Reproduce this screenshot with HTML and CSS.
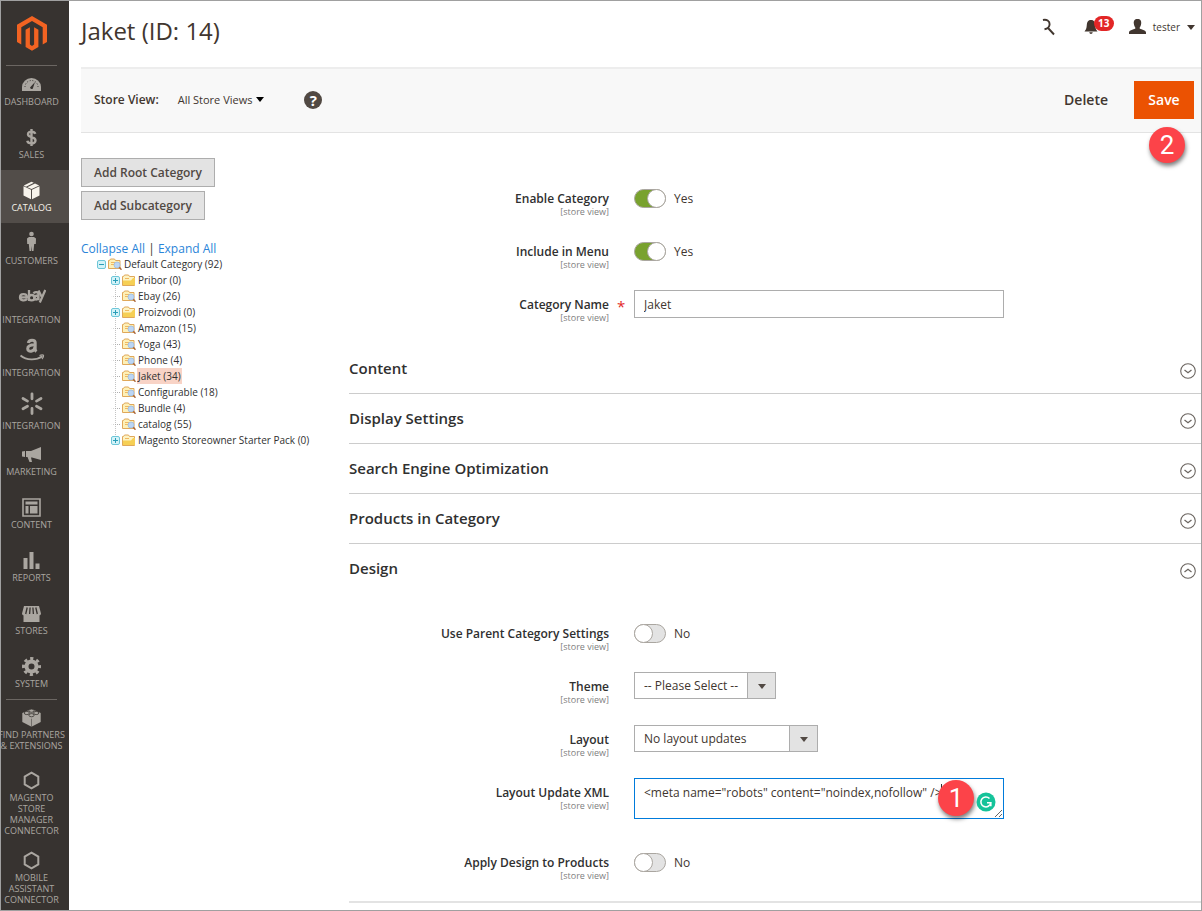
FILE: index.html
```html
<!DOCTYPE html>
<html lang="en">
<head>
<meta charset="utf-8">
<title>Jaket (ID: 14)</title>
<link rel="stylesheet" href="styles.css">
</head>
<body>
<svg class="defs" aria-hidden="true">
  <symbol id="folder" viewBox="0 0 14 12">
    <path d="M.5 11.500V2.500h1l1-1.500h4l1 1.500h5v9z" fill="#fdf3c4" stroke="#e0a85a"/>
    <path d="M1 11V6.500h8l2-2.500h2v7z" fill="#f6cf55"/>
    <path d="M3 4.500h4" stroke="#f0b860"/>
  </symbol>
  <symbol id="folder-search" viewBox="0 0 14 12">
    <path d="M.5 10.500V2.500h1l1-1.500h4l1 1.500h4.500v8z" fill="#fdf0b8" stroke="#e0a85a"/>
    <path d="M3 4.500h4M3 6.500h3" stroke="#f0b860"/>
    <circle cx="9" cy="7" r="3" fill="#bcd6f5" stroke="#9dbbe0" stroke-width=".8"/>
    <path d="M11.300 9.300l2.200 2.400" stroke="#a8663c" stroke-width="1.500"/>
  </symbol>
  <symbol id="plus" viewBox="0 0 9 9">
    <rect x=".5" y=".5" width="8" height="8" rx="1.500" fill="#d4f3f8" stroke="#6ec6d8"/>
    <path d="M2 4.500h5M4.500 2v5" stroke="#2a9db8"/>
  </symbol>
  <symbol id="minus" viewBox="0 0 9 9">
    <rect x=".5" y=".5" width="8" height="8" rx="1.500" fill="#d4f3f8" stroke="#6ec6d8"/>
    <path d="M2 4.500h5" stroke="#2a9db8"/>
  </symbol>
  <symbol id="chevron" viewBox="0 0 16 16">
    <circle cx="8" cy="8" r="7.300" fill="none" stroke="#6b6560" stroke-width="1.100"/>
    <path d="M4.500 7l3.500 2.700L11.500 7" fill="none" stroke="#6b6560" stroke-width="1.300"/>
  </symbol>
  <symbol id="hex" viewBox="0 0 19 19">
    <path d="M9.500 1.700l6.800 3.900v7.800l-6.800 3.900-6.800-3.900V5.600z" fill="none" stroke="currentColor" stroke-width="2"/>
  </symbol>
</svg>

<div class="page">
  <nav class="menu">
    <a class="logo" href="#" aria-label="Home">
      <svg width="30" height="35" viewBox="0 0 30 35"><path d="M15 0L0 8.700v17.400l4.300 2.500V11.200L15 5l10.700 6.200v17.400l4.300-2.500V8.700zM8.600 13.700v17.400L15 34.800l6.400-3.700V13.700l-4.300-2.500v17.400L15 29.900l-2.100-1.300V11.200z" fill="#f26322"/></svg>
    </a>
    <a class="item first" href="#"><svg class="icon" viewBox="0 0 19 19"><path d="M0 16V12a9.500 9 0 0 1 19 0v4z" fill="currentColor"/><path d="M3 12a6.500 6.500 0 0 1 13 0" fill="none" stroke="#373330" stroke-dasharray="1 1.700"/><path d="M13 7l-5 5.500c1 2.500 3 1.500 3 .5z" fill="#373330"/></svg>Dashboard</a>
    <a class="item" href="#"><svg class="icon" viewBox="0 0 19 19"><path d="M13.300 5.800C12.500 3.300 6 2.700 6 6.200c0 3.800 7.500 2.200 7.500 6.300 0 4-7.700 3.600-8.200.3M9.500 1v17" fill="none" stroke="currentColor" stroke-width="2.400"/></svg>Sales</a>
    <a class="item active" href="#"><svg class="icon" viewBox="0 0 19 19"><path d="M9 8.800v9.400l-7.500-3.700V5.300zM10 8.800v9.400l7.500-3.700V5.300zM9.500 .8l2.300 1L4 5.700 1.800 4.600zM13 2.400l4.200 2.100-7.700 3.600-4.200-1.900z" fill="currentColor"/></svg>Catalog</a>
    <a class="item" href="#"><svg class="icon customer" viewBox="0 0 19 19"><circle cx="9.500" cy="2" r="2.300" fill="currentColor"/><path d="M7 5h5l2 1.500-.2 5.500h-1.600L11.500 19h-1.600l-.4-5-.4 5H7.500L6.800 12H5.200L5 6.500z" fill="currentColor"/></svg>Customers</a>
    <a class="item wide" href="#"><svg class="icon" viewBox="0 0 28 25"><g fill="none" stroke="currentColor" stroke-width="2.300"><path d="M2 12.300h7c0-4.200-7-4.200-7 0 0 3.800 5.500 3.800 7 1.500"/><path d="M11 5v11"/><ellipse cx="13.600" cy="12.700" rx="2.900" ry="2.700"/><path d="M15.500 8.500c1-2 5-1.800 5 .8v6M20 10.500c-4 0-5 4-2 4 1.500 0 2-1 2.200-2"/><path d="M20.500 5.500l3 6M27.300 5l-5.500 12.500"/></g></svg>Integration</a>
    <a class="item wide" href="#"><svg class="icon" viewBox="0 0 28 25"><g fill="none" stroke="currentColor"><path d="M10.300 5C11 1.200 17.200 1.500 17.200 4.700v6.500c0 1 .5 1.700 1.300 2.300M17 6.700c-5 0-7.300 1.300-7.300 4 0 4 6.800 3.200 7.300-1.500" stroke-width="3"/><path d="M2.500 17.500c6 5 15.500 5.200 22 .8" stroke-width="1.800"/><path d="M21.500 17.500c2-.8 3.800-.8 4 0s-.5 2.500-1.500 3.500" stroke-width="1.300"/></g></svg>Integration</a>
    <a class="item wide" href="#"><svg class="icon" viewBox="0 0 28 25"><g stroke="currentColor" stroke-width="2.800" stroke-linecap="round"><path d="M14 2.800v5M14 17.500v5M5 7.500l4.500 2.600M18.500 15.200l4.500 2.600M23 7.500l-4.500 2.600M9.500 15.200L5 17.800"/></g></svg>Integration</a>
    <a class="item" href="#"><svg class="icon" viewBox="0 0 19 19"><path d="M19 2v13l-9-2.500H9l1 4.500H7.500L5.500 12H4V6h5zM0 6.500l3-.5v6l-3-.5z" fill="currentColor"/></svg>Marketing</a>
    <a class="item" href="#"><svg class="icon" viewBox="0 0 19 19"><path d="M1 1h17v17H1z" fill="none" stroke="currentColor" stroke-width="1.600"/><path d="M3.500 3.500h12v3h-12zM3.500 8h3v7.500h-3zM8 8h7.500v7.500H8z" fill="currentColor"/></svg>Content</a>
    <a class="item" href="#"><svg class="icon" viewBox="0 0 19 19"><path d="M1.500 7h4v11h-4zM7.500 1h4v17h-4zM13.500 12.500h4V18h-4z" fill="currentColor"/></svg>Reports</a>
    <a class="item" href="#"><svg class="icon" viewBox="0 0 19 19"><path d="M2 2h15l2 7.500c-.3 1.500-1 1.700-1.500 1.700V18h-16v-6.800c-.5 0-1.200-.2-1.500-1.700z" fill="currentColor"/><path d="M5.200 3.500L3.700 10M8.100 3.500L7.600 10M10.900 3.500l.5 6.500M13.800 3.500l1.500 6.500" stroke="#373330" stroke-width="1.300"/></svg>Stores</a>
    <a class="item" href="#"><svg class="icon" viewBox="0 0 19 19"><g fill="none" stroke="currentColor"><circle cx="9.500" cy="9.500" r="5" stroke-width="4"/><circle cx="9.500" cy="9.500" r="8" stroke-width="3" stroke-dasharray="3.200 3.083" stroke-dashoffset="1.600"/></g></svg>System</a>
    <a class="item partners" href="#"><svg class="icon" viewBox="0 0 19 19"><path d="M9.500 1L18.700 5v9L9.500 18.700.3 14V5z" fill="currentColor"/><g fill="currentColor" stroke="#373330" stroke-width=".8"><ellipse cx="9.500" cy="2.700" rx="2.600" ry="1.600"/><ellipse cx="4.800" cy="5" rx="2.600" ry="1.600"/><ellipse cx="14.200" cy="5" rx="2.600" ry="1.600"/><ellipse cx="9.500" cy="7.200" rx="2.600" ry="1.600"/></g><path d="M9.500 10.700v8" fill="none" stroke="#373330" stroke-width=".5"/></svg><span class="nowrap">Find Partners<br>&amp; Extensions</span></a>
    <a class="item tight" href="#"><svg class="icon"><use href="#hex"/></svg>Magento<br>Store<br>Manager<br>Connector</a>
    <a class="item tight" href="#"><svg class="icon"><use href="#hex"/></svg>Mobile<br>Assistant<br>Connector</a>
  </nav>

  <main class="main">
    <header class="header">
      <h1>Jaket (ID: 14)</h1>
      <div class="tools">
        <button class="tool" aria-label="Search"><svg width="14" height="18" viewBox="0 0 14 18"><path d="M1 2C4.500 1 7.800 3 7.600 6.200 7.500 9 5.500 10.700 2.500 11.200M6.500 10.500l5.500 6" fill="none" stroke="#41362f" stroke-width="1.900"/></svg></button>
        <button class="tool bell" aria-label="Notifications"><svg width="14" height="16" viewBox="0 0 14 16"><path d="M7 1c3.500 0 4 2.500 4.300 6 .2 2.500 1 4 2.200 5.500H.5C1.700 11 2.500 9.500 2.700 7 3 3.500 3.500 1 7 1zM5.300 13.300h3.400C8.500 15.500 5.500 15.500 5.300 13.300z" fill="#41362f"/></svg><span class="count">13</span></button>
        <button class="tool user"><svg width="17" height="16" viewBox="0 0 17 16"><path d="M8.500 0c3 0 4 2 3.700 4.500C12 6.500 11 8 10.500 9c0 1.500 6.500 1.500 6.500 4.500V15H0v-1.500C0 10.500 6.500 10.500 6.500 9 6 8 5 6.500 4.800 4.500 4.500 2 5.500 0 8.500 0z" fill="#41362f"/></svg>tester<span class="caret"></span></button>
      </div>
    </header>

    <div class="toolbar">
      <span class="store-label">Store View:</span>
      <button class="store-switch">All Store Views<span class="caret"></span></button>
      <button class="help" aria-label="Help">?</button>
      <div class="actions">
        <button class="delete">Delete</button>
        <div class="save-wrap"><button class="save">Save</button><span class="marker save-marker">2</span></div>
      </div>
    </div>

    <div class="columns">
      <aside class="side">
        <div class="add">
          <button class="add-button">Add Root Category</button>
          <button class="add-button">Add Subcategory</button>
        </div>
        <p class="links"><a href="#">Collapse All</a> <span>|</span> <a href="#">Expand All</a></p>
        <ul class="tree">
          <li>
            <div class="node"><svg class="knob"><use href="#minus"/></svg><svg class="folder"><use href="#folder-search"/></svg><a href="#">Default Category (92)</a></div>
            <ul class="branch">
              <li class="node"><svg class="knob"><use href="#plus"/></svg><svg class="folder"><use href="#folder"/></svg><a href="#">Pribor (0)</a></li>
              <li class="node"><span class="knob elbow"></span><svg class="folder"><use href="#folder-search"/></svg><a href="#">Ebay (26)</a></li>
              <li class="node"><svg class="knob"><use href="#plus"/></svg><svg class="folder"><use href="#folder"/></svg><a href="#">Proizvodi (0)</a></li>
              <li class="node"><span class="knob elbow"></span><svg class="folder"><use href="#folder-search"/></svg><a href="#">Amazon (15)</a></li>
              <li class="node"><span class="knob elbow"></span><svg class="folder"><use href="#folder-search"/></svg><a href="#">Yoga (43)</a></li>
              <li class="node"><span class="knob elbow"></span><svg class="folder"><use href="#folder-search"/></svg><a href="#">Phone (4)</a></li>
              <li class="node"><span class="knob elbow"></span><svg class="folder"><use href="#folder-search"/></svg><a class="selected" href="#">Jaket (34)</a></li>
              <li class="node"><span class="knob elbow"></span><svg class="folder"><use href="#folder-search"/></svg><a href="#">Configurable (18)</a></li>
              <li class="node"><span class="knob elbow"></span><svg class="folder"><use href="#folder-search"/></svg><a href="#">Bundle (4)</a></li>
              <li class="node"><span class="knob elbow"></span><svg class="folder"><use href="#folder-search"/></svg><a href="#">catalog (55)</a></li>
              <li class="node"><svg class="knob"><use href="#plus"/></svg><svg class="folder"><use href="#folder"/></svg><a href="#">Magento Storeowner Starter Pack (0)</a></li>
            </ul>
          </li>
        </ul>
      </aside>

      <form class="form">
        <div class="fields general">
          <div class="field"><div class="caption"><label for="enable">Enable Category</label><small>[store view]</small></div><div class="switch"><input type="checkbox" id="enable" checked><span>Yes</span></div></div>
          <div class="field"><div class="caption"><label for="menu">Include in Menu</label><small>[store view]</small></div><div class="switch"><input type="checkbox" id="menu" checked><span>Yes</span></div></div>
          <div class="field"><div class="caption required"><label for="name">Category Name</label><small>[store view]</small></div><input class="text" type="text" id="name" value="Jaket"></div>
        </div>
        <button type="button" class="section">Content<svg class="chevron"><use href="#chevron"/></svg></button>
        <button type="button" class="section">Display Settings<svg class="chevron"><use href="#chevron"/></svg></button>
        <button type="button" class="section">Search Engine Optimization<svg class="chevron"><use href="#chevron"/></svg></button>
        <button type="button" class="section">Products in Category<svg class="chevron"><use href="#chevron"/></svg></button>
        <button type="button" class="section open">Design<svg class="chevron"><use href="#chevron"/></svg></button>
        <div class="fields design">
          <div class="field"><div class="caption"><label for="parent">Use Parent Category Settings</label><small>[store view]</small></div><div class="switch"><input type="checkbox" id="parent"><span>No</span></div></div>
          <div class="field"><div class="caption"><label for="theme">Theme</label><small>[store view]</small></div><div class="select theme"><select id="theme"><option>-- Please Select --</option></select></div></div>
          <div class="field"><div class="caption"><label for="layout">Layout</label><small>[store view]</small></div><div class="select layout"><select id="layout"><option>No layout updates</option></select></div></div>
          <div class="field"><div class="caption"><label for="xml">Layout Update XML</label><small>[store view]</small></div>
            <div class="xml"><textarea id="xml" spellcheck="false">&lt;meta name="robots" content="noindex,nofollow" /&gt;</textarea><span class="cursor"></span><span class="marker xml-marker">1</span><svg class="grammar" viewBox="0 0 20 20"><circle cx="10" cy="10" r="9.500" fill="#15c39a"/><path d="M13.500 6.500a5 5 0 1 0 1.300 4.300H11M14.800 10.800v3.500" fill="none" stroke="#fff" stroke-width="1.600"/></svg></div></div>
          <div class="field"><div class="caption"><label for="apply">Apply Design to Products</label><small>[store view]</small></div><div class="switch"><input type="checkbox" id="apply"><span>No</span></div></div>
        </div>
      </form>
    </div>
  </main>
</div>
</body>
</html>
```
FILE: styles.css
```css
*, *::before, *::after { box-sizing: border-box; }
body {
  margin: 0;
  font: 12px/18px "Open Sans", "Noto Sans", sans-serif;
  color: #41362f;
  background: #fff;
}
button, input, select, textarea { font: inherit; color: inherit; margin: 0; }
button { border: 0; background: none; padding: 0; cursor: pointer; }
a { color: inherit; text-decoration: none; }
ul { list-style: none; margin: 0; padding: 0; }
.defs { position: absolute; width: 0; height: 0; }

.page { display: flex; min-height: 100vh; border: 1px solid #a0a0a0; }

/* Navigation */
.menu { flex: none; width: 68px; padding-right: 7px; background: #373330; color: #aaa6a0; }
.logo { display: flex; align-items: center; justify-content: center; height: 65px; margin: 0 5px; border-bottom: 1px solid #6b6662; }
.item {
  display: flex; flex-direction: column; align-items: center;
  padding: 11px 0 10px;
  font-size: 9px; line-height: 11px; text-align: center; text-transform: uppercase;
}
.icon { display: block; width: 19px; height: 19px; margin-bottom: 2px; flex: none; }
.customer { height: 21px; margin-top: -3px; margin-bottom: 3px; }
.first { padding-top: 9px; }
.active { margin-right: -7px; padding-right: 7px; background: #524d49; color: #f7f3eb; }
.wide + .item { padding-top: 10px; }
.item.wide { padding: 9px 0 4px; }
.wide .icon { width: 28px; height: 25px; margin-bottom: 4px; }
.partners { border-top: 1px solid #6b6662; margin: 0 5px; padding: 8px 0 9px; }
.nowrap { white-space: nowrap; }
.tight { padding-bottom: 4px; }

/* Header */
.main { flex: 1; min-width: 0; padding-left: 12px; }
.header { display: flex; justify-content: space-between; height: 66px; padding: 12px 6px 0 0; }
h1 { margin: 0; font-size: 24px; line-height: 35px; font-weight: 400; }
.tools { display: flex; align-items: center; height: 28px; gap: 28px; font-size: 10px; }
.tool { display: flex; align-items: center; }
.bell { position: relative; margin-right: 4px; }
.count {
  position: absolute; left: 10px; top: -3px; width: 20px; border-radius: 8px;
  background: #e22626; color: #fff; font-size: 10px; line-height: 15px; font-weight: 700; text-align: center;
}
.user { gap: 7px; margin-left: -1px; }
.caret { border: 4px solid transparent; border-top: 5px solid currentColor; border-bottom: 0; }

.toolbar {
  display: flex; align-items: center; height: 66px; padding: 0 7px 2px 13px;
  border-top: 2px solid #ededed; border-bottom: 1px solid #e3e3e3; background: #f8f8f8;
}
.store-label { font-weight: 600; }
.store-switch { display: flex; align-items: center; gap: 4px; margin-left: 19px; font-size: 11px; }
.store-switch .caret { color: #000; }
.help {
  width: 18px; height: 18px; margin-left: 40px; border-radius: 50%;
  background: #514943; color: #fff; font-size: 15px; line-height: 18px; font-weight: 700;
}
.actions { display: flex; align-items: center; gap: 26px; margin-left: auto; font-size: 14px; font-weight: 600; }
.save-wrap { position: relative; }
.save { display: block; width: 60px; height: 38px; background: #eb5202; color: #fff; }
.marker {
  position: absolute; width: 36px; height: 36px; border-radius: 50%;
  background: #fc4349; color: #fff; box-shadow: 1px 3px 4px rgba(0, 0, 0, .5);
  font: 26px/36px Roboto, sans-serif; text-align: center;
}
.save-marker { left: 15px; top: 46px; }

/* Category tree */
.columns { display: flex; }
.side { flex: none; width: 268px; padding-top: 25px; }
.add { display: flex; flex-direction: column; align-items: flex-start; gap: 4px; }
.add-button { height: 29px; padding: 1px 12px 0; border: 1px solid #adadad; background: #e3e3e3; color: #514943; font-weight: 600; }
.links { margin: 21px 0 0; line-height: 16px; }
.links a { color: #2a84d8; }
.tree { margin-top: -1px; font-size: 10px; line-height: 16px; padding-left: 16px; }
.node { display: flex; align-items: center; height: 16px; white-space: nowrap; color: #303030; }
.knob { flex: none; width: 9px; height: 9px; margin-right: 2px; }
.folder { flex: none; width: 14px; height: 12px; margin-right: 1px; }
.node a { padding: 0 1px; }
.node .selected { background: #f8d3c6; }
.branch { padding-left: 14px; background: repeating-linear-gradient(#c4c4c4 0 1px, transparent 1px 2px) 18px 0 / 1px 168px no-repeat; }
.elbow { height: 1px; border-left: 5px solid transparent; border-top: 1px dotted #b0b0b0; }

/* Form */
.form { flex: 1; min-width: 0; }
.fields { display: grid; gap: 19px; }
.general { padding: 51px 0 20px; }
.design { padding: 25px 0 19px; border-bottom: 2px solid #e3e3e3; }
.field { display: grid; grid-template-columns: 260px minmax(0, 370px); column-gap: 25px; align-items: start; }
.caption { position: relative; min-height: 34px; padding-top: 7px; text-align: right; color: #303030; }
.caption label { display: block; line-height: 16px; font-weight: 600; }
.caption small { display: block; font-size: 9px; line-height: 9px; color: #808080; }
.required::after { content: "*"; position: absolute; left: 268px; top: 7px; color: #e22626; font-size: 15px; }
.switch { display: flex; align-items: center; height: 29px; gap: 8px; }
.switch input {
  appearance: none; width: 32px; height: 19px; border: 1px solid #aaa6a0; border-radius: 10px;
  background: #e3e3e3; display: flex;
}
.switch input::before { content: ""; width: 19px; height: 19px; margin: -1px; border: 1px solid #aaa6a0; border-radius: 50%; background: #fff; }
.switch input:checked { background: #79a22e; justify-content: flex-end; }
.text { width: 100%; height: 28px; padding: 0 9px; border: 1px solid #adadad; }
.select { position: relative; }
.theme { width: 142px; }
.layout { width: 184px; }
.select select {
  appearance: none; display: block; width: 100%; height: 27px; padding: 0 30px 0 9px; border: 1px solid #adadad; border-radius: 0;
  background: linear-gradient(90deg, #adadad 1px, #e3e3e3 1px) right / 28px 100% no-repeat #fff;
}
.select::after { content: ""; position: absolute; right: 10px; top: 12px; border: 4px solid transparent; border-top: 5px solid #514943; border-bottom: 0; }
.xml { position: relative; padding-bottom: 10px; }
.xml textarea { display: block; width: 100%; height: 41px; padding: 5px 9px; border: 1px solid #007bdb; outline: 0; line-height: 18px; overflow: hidden; }
.cursor { position: absolute; left: 307px; top: 6px; width: 1px; height: 14px; background: #303030; }
.xml-marker { right: 30px; top: 2px; }
.grammar { position: absolute; right: 8px; top: 14px; width: 20px; height: 20px; }

.section {
  display: flex; align-items: center; justify-content: space-between; width: 100%; height: 50px;
  padding: 0 5px 2px 0; border-bottom: 1px solid #ccc; color: #303030; font-size: 15px; font-weight: 600;
}
.section.open { border-bottom-color: transparent; }
.chevron { width: 16px; height: 16px; margin-top: 7px; }
.open .chevron { transform: rotate(180deg); }
```
